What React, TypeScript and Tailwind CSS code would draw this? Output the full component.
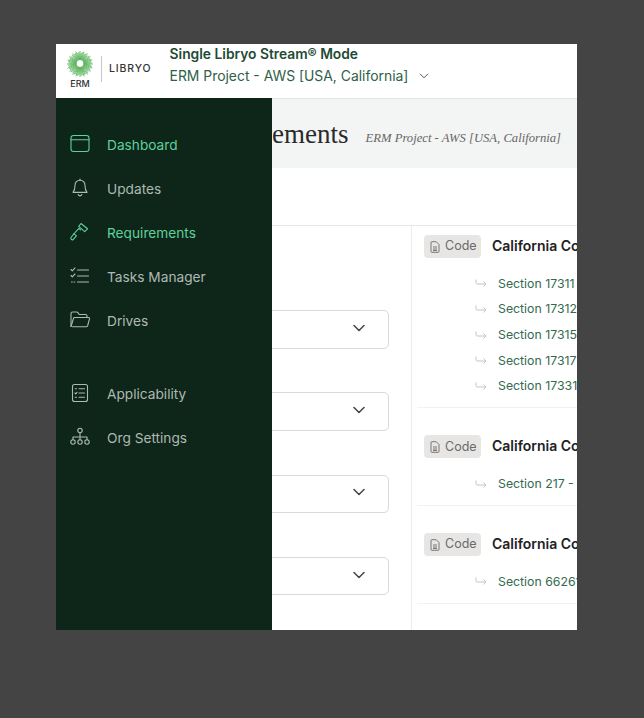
import React from "react";

const sans = "font-['Inter','Liberation_Sans',sans-serif]";

function Logo() {
  const rays = Array.from({ length: 60 }, (_, i) => (i * 360) / 60);
  return (
    <svg width="26" height="26" viewBox="0 0 26 26" className="block">
      {rays.map((a, i) => {
        const r = (a * Math.PI) / 180;
        const inner = 3.6;
        const outer = i % 3 === 0 ? 13 : i % 3 === 1 ? 11.2 : 12;
        return (
          <line
            key={a}
            x1={13 + inner * Math.cos(r)}
            y1={12.5 + inner * Math.sin(r)}
            x2={13 + outer * Math.cos(r)}
            y2={13 + outer * Math.sin(r)}
            stroke="#4fae52"
            strokeWidth="0.8"
          />
        );
      })}
    </svg>
  );
}

function Icon({ children }: { children: React.ReactNode }) {
  return (
    <svg width="20" height="20" viewBox="0 0 20 20" fill="none" stroke="currentColor" strokeWidth="1.1" strokeLinecap="round" strokeLinejoin="round" className="shrink-0">
      {children}
    </svg>
  );
}

const DashIcon = (
  <Icon>
    <rect x="1" y="1.500" width="18" height="16" rx="2.500" />
    <path d="M1 5.800h18" />
  </Icon>
);
const BellIcon = (
  <Icon>
    <path d="M10 2.200c-3 0-5 2.200-5 5.200 0 3.500-.8 5.500-2 7h14c-1.200-1.500-2-3.500-2-7 0-3-2-5.200-5-5.200z" />
    <path d="M8.200 16.500c.3 1 1 1.400 1.800 1.400s1.500-.4 1.800-1.400" />
    <path d="M10 1v1.200" />
  </Icon>
);
const GavelIcon = (
  <Icon>
    <path d="M11 1.500l6.500 5.300-2.800 2.900-6-5.400z" />
    <path d="M10.500 7.800L8.900 6.300 4.200 11.500" />
    <path d="M1 15.500l3-3.800 2.400 2.100-3.300 3.900c-1.200.6-2.800-.9-2.100-2.200z" />
  </Icon>
);
const TasksIcon = (
  <Icon>
    <path d="M7.500 4h11M7.500 10h11M7.500 16h11" />
    <path d="M1 3.500l1.300 1.300L5 1.800M1 9.500l1.300 1.300L5 8" />
    <path d="M1.500 16h.8M4 16h.8" />
  </Icon>
);
const FolderIcon = (
  <Icon>
    <path d="M1 16.500V3.500C1 2.600 1.600 2 2.500 2h4.300c.5 0 .8.200 1.100.6L9.200 4.500h6.300c.9 0 1.500.6 1.500 1.500v1.500" />
    <path d="M1 16.500L3.500 8.300c.2-.5.500-.8 1-.8h14c.7 0 1.200.6 1 1.300l-1.800 6.700c-.3.700-.8 1.200-1.500 1.200H2.500" />
  </Icon>
);
const ApplicIcon = (
  <Icon>
    <rect x="2.500" y="1.500" width="15" height="17" rx="2" />
    <path d="M9 5.800h5.500M9 10h5.500M9 14.200h5.500" />
    <path d="M5.200 5.800h1.300" />
    <path d="M5 10l.8.800 1.200-1.500" />
    <path d="M5.200 14.200h1.300" />
  </Icon>
);
const OrgIcon = (
  <Icon>
    <circle cx="10" cy="3.500" r="2.200" />
    <circle cx="3" cy="15" r="2.200" />
    <circle cx="10" cy="15" r="2.200" />
    <circle cx="17" cy="15" r="2.200" />
    <path d="M10 5.700v7.100M3 12.800V10h14v2.800" />
  </Icon>
);

function NavItem({ icon, label, active, className = "" }: { icon: React.ReactNode; label: string; active?: boolean; className?: string }) {
  return (
    <div className={`flex items-center gap-[17px] h-[44px] ${active ? "text-[#5ed19c]" : "text-[#adb9b2]"} ${className}`}>
      {icon}
      <span className="text-[13.700px] leading-5 mt-[2px]">{label}</span>
    </div>
  );
}

function Chevron() {
  return (
    <svg width="12" height="8" viewBox="0 0 12 8" fill="none" stroke="#444" strokeWidth="1.500" strokeLinecap="round" strokeLinejoin="round" className="mb-[3px]">
      <path d="M1 1.500l5 5 5-5" />
    </svg>
  );
}

function Select() {
  return (
    <div className="h-[38.500px] w-[316px] border border-[#d9d9d9] rounded-[5px] flex items-center justify-end pr-[23px] bg-white">
      <Chevron />
    </div>
  );
}

function CodeBadge() {
  return (
    <span className="w-[57px] h-[23px] shrink-0 rounded-[4px] bg-[#e7e6e4] text-[#6b6b6b] text-[12.500px] flex items-center gap-[5px] pl-[6px]">
      <svg width="10" height="12" viewBox="0 0 10 12" fill="none" stroke="#6b6b6b" strokeWidth="0.900">
        <path d="M1 1.500C1 1 1.300.7 1.800.7h4.400L9 3.500v7c0 .5-.3.800-.8.800H1.800c-.5 0-.8-.3-.8-.8z" />
        <path d="M3 6h4M3 8h4M3 9.500h4" />
      </svg>
      Code
    </span>
  );
}

function Section({ text }: { text: string }) {
  return (
    <div className="flex items-center h-[25.700px] pl-[51px] whitespace-nowrap">
      <svg width="12" height="9" viewBox="0 0 12 9" fill="none" stroke="#c4c4c4" strokeWidth="1" className="shrink-0 mr-[11px]">
        <path d="M1 .5v3.200c0 .8.500 1.300 1.300 1.300H11M8.500 2.500L11 5 8.500 7.500" />
      </svg>
      <span className="text-[12.300px] text-[#356a4f]">{text}</span>
    </div>
  );
}

function CodeBlock({ sections }: { sections: string[] }) {
  return (
    <div className="border-b border-[#f2f2f2] whitespace-nowrap pl-[7px] overflow-hidden">
      <div className="flex items-center gap-[11px]">
        <CodeBadge />
        <span className="text-[14px] font-semibold text-[#222] mb-[2px]">California Code of Regulations</span>
      </div>
      <div className="mt-[13px] pb-[8px]">
        {sections.map((s) => (
          <Section key={s} text={s} />
        ))}
      </div>
    </div>
  );
}

export default function App() {
  return (
    <div className={`min-h-[718px] bg-[#444444] pt-[44px] pl-[56px] ${sans}`}>
      <div className="relative w-[521px] h-[586px] bg-white overflow-hidden flex flex-col">
        <header className="h-[55px] shrink-0 bg-white border-b border-[#e4e4e4] flex items-start pl-[11px]">
          <div className="w-[26px] flex flex-col items-center pt-[7px]">
            <Logo />
            <span className="text-[9px] leading-[9px] font-medium text-[#333] mt-[2px]">ERM</span>
          </div>
          <div className="w-px h-[26px] bg-[#c8c8c8] ml-[8px] mt-[12px]" />
          <span className="ml-[7px] mt-[17px] text-[10.500px] leading-4 font-medium tracking-[0.085em] text-[#333]">LIBRYO</span>
          <div className="ml-[18px] flex flex-col whitespace-nowrap">
            <span className="text-[13.800px] leading-[20px] font-semibold text-[#1f4a35]">Single Libryo Stream® Mode</span>
            <span className="mt-[2px] text-[13.900px] leading-[20px] text-[#2f6048] flex items-center gap-[11px]">
              ERM Project - AWS [USA, California]
              <svg width="10" height="6" viewBox="0 0 10 6" fill="none" stroke="#555" strokeWidth="1"><path d="M1 .8l4 4 4-4" /></svg>
            </span>
          </div>
        </header>

        <div className="h-[69px] shrink-0 bg-[#f3f4f4] flex items-center justify-end pr-[16px] whitespace-nowrap">
          <span className="font-['Liberation_Serif',serif] text-[27px] text-[#2a2a2a] leading-8">Requirements</span>
          <span className="ml-[17px] mt-[10px] font-['Liberation_Serif',serif] italic text-[12.650px] text-[#666]">ERM Project - AWS [USA, California]</span>
        </div>

        <div className="h-[58px] shrink-0 bg-white border-b border-[#e6e6e6]" />

        <div className="flex-1 flex min-h-0">
          <div className="w-[356px] shrink-0 border-r border-[#ececec] pl-[17px] pt-[84px] flex flex-col gap-[43.800px]">
            <Select />
            <Select />
            <Select />
            <Select />
          </div>
          <div className="flex-1 min-w-0 overflow-hidden pl-[5px] pt-[9px] flex flex-col gap-[27px]">
            <CodeBlock sections={["Section 17311 - Definitions", "Section 17312 - Scope", "Section 17315 - General", "Section 17317 - Records", "Section 17331 - Reports"]} />
            <CodeBlock sections={["Section 217 - Title"]} />
            <CodeBlock sections={["Section 66261 - Waste"]} />
          </div>
        </div>

        <nav className="absolute left-0 top-[54px] bottom-0 w-[216px] bg-[#0d2619] pl-[14px] pt-[24px]">
          <NavItem icon={DashIcon} label="Dashboard" active />
          <NavItem icon={BellIcon} label="Updates" />
          <NavItem icon={GavelIcon} label="Requirements" active />
          <NavItem icon={TasksIcon} label="Tasks Manager" />
          <NavItem icon={FolderIcon} label="Drives" />
          <NavItem icon={ApplicIcon} label="Applicability" className="mt-[29px]" />
          <NavItem icon={OrgIcon} label="Org Settings" />
        </nav>
      </div>
    </div>
  );
}
